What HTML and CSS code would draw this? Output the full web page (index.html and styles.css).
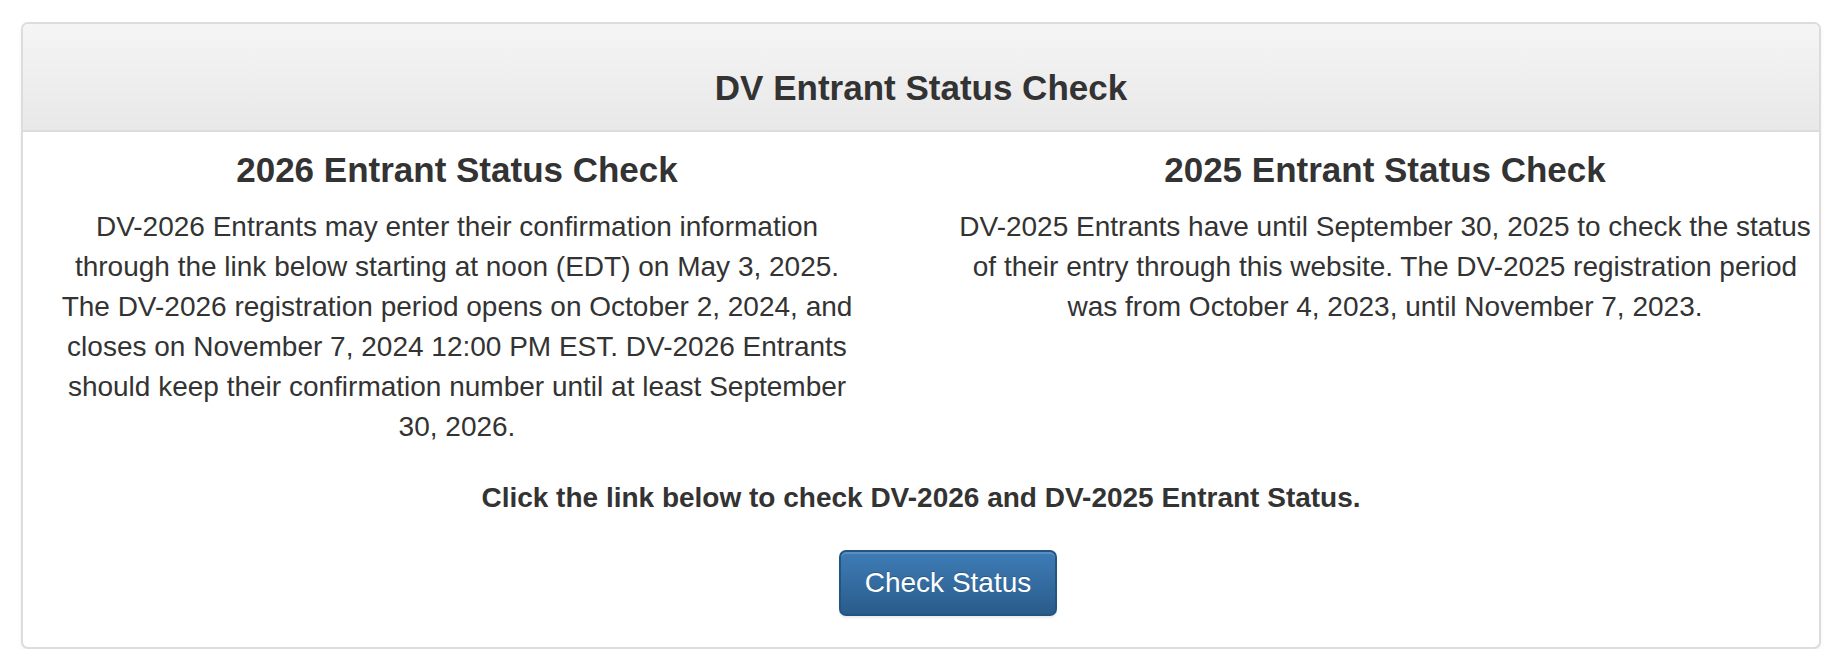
FILE: index.html
```html
<!DOCTYPE html>
<html lang="en">
<head>
    <meta charset="UTF-8">
    <meta name="viewport" content="width=device-width, initial-scale=1.0">
    <title>DV Entrant Status Check</title>
    <link rel="stylesheet" href="styles.css">
</head>
<body>

<div class="page">
    <div class="panel">
        <div class="panel-heading">
            <h1 class="panel-title">DV Entrant Status Check</h1>
        </div>

        <div class="panel-body">
            <div class="row">
                <div class="col col-2026">
                    <h2>2026 Entrant Status Check</h2>
                    <p>DV-2026 Entrants may enter their confirmation information through the link below starting at noon (EDT) on May 3, 2025. The DV-2026 registration period opens on October 2, 2024, and closes on November 7, 2024 12:00 PM EST. DV-2026 Entrants should keep their confirmation number until at least September 30, 2026.</p>
                </div>
                <div class="col col-2025">
                    <h2>2025 Entrant Status Check</h2>
                    <p>DV-2025 Entrants have until September 30, 2025 to check the status of their entry through this website. The DV-2025 registration period was from October 4, 2023, until November 7, 2023.</p>
                </div>
            </div>

            <p class="notice"><strong>Click the link below to check DV-2026 and DV-2025 Entrant Status.</strong></p>

            <div class="actions">
                <a class="btn-primary" href="#">Check Status</a>
            </div>
        </div>
    </div>
</div>

</body>
</html>
```

FILE: styles.css
```css
body {
    font-family: "Liberation Sans", Arial, sans-serif;
    font-size: 28px;
    line-height: 40px;
    color: #333;
    margin: 0;
    padding: 0;
    background-color: #fff;
}
.page {
    padding: 22px 15px 0 21px;
}
.panel {
    border: 2px solid #dcdcdc;
    border-radius: 7px;
    background-color: #fff;
    box-shadow: 0 2px 4px rgba(0, 0, 0, 0.05);
}
.panel-heading {
    padding: 44px 30px 22px;
    background-image: linear-gradient(to bottom, #f5f5f5 0, #e8e8e8 100%);
    border-bottom: 2px solid #dcdcdc;
    border-radius: 5px 5px 0 0;
    text-align: center;
}
.panel-title {
    margin: 0;
    font-size: 35px;
    line-height: 40px;
    font-weight: bold;
}
.panel-body {
    padding: 0 0 31px;
}
.row {
    display: grid;
    grid-template-columns: 1fr 1fr;
    margin: 0 -30px;
}
.col {
    padding: 0 30px;
    text-align: center;
}
.col h2 {
    margin: 18px 0 17px;
    font-size: 35px;
    line-height: 40px;
    font-weight: bold;
}
.col p {
    margin: 0;
}
.col-2026 p {
    padding: 0 31px;
}
.notice {
    margin: 31px 0 32px;
    text-align: center;
}
.actions {
    text-align: center;
    padding-left: 54px;
}
.btn-primary {
    display: inline-block;
    padding: 11px 24px;
    color: #fff;
    text-decoration: none;
    border: 2px solid #245580;
    border-radius: 7px;
    background-image: linear-gradient(to bottom, #3e7cb6 0, #2a5c8c 100%);
    text-shadow: 0 -1px 0 rgba(0, 0, 0, 0.2);
    box-shadow: inset 0 2px 0 rgba(255, 255, 255, 0.15), 0 2px 2px rgba(0, 0, 0, 0.075);
}
.btn-primary:hover {
    background-image: none;
    background-color: #265a88;
}
```
